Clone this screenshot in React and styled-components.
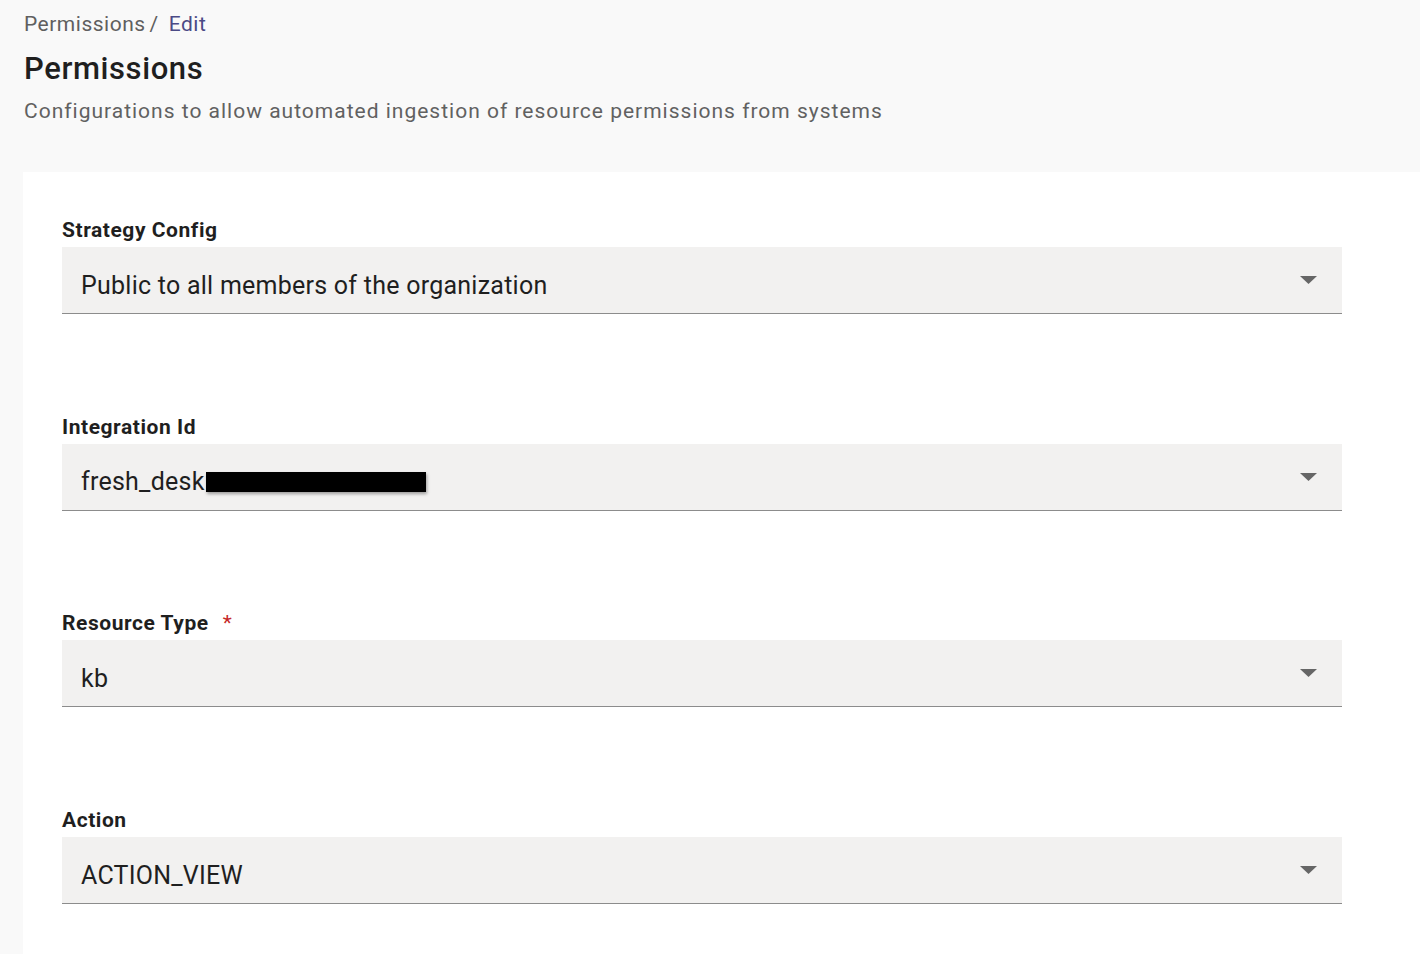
import styled, { createGlobalStyle } from "styled-components";

const GlobalStyle = createGlobalStyle`
  html, body {
    margin: 0;
    padding: 0;
    background: #f9f9f9;
    font-family: Roboto, "Liberation Sans", sans-serif;
  }
`;

const Page = styled.div`
  min-height: 100vh;
  background: #f9f9f9;
  overflow: hidden;
`;

const Header = styled.header`
  padding: 12px 24px 0 24px;
`;

const Breadcrumb = styled.div`
  display: flex;
  font-size: 21px;
  line-height: 24px;
  color: #5f5f5f;
  letter-spacing: 0.5px;
`;

const Crumb = styled.span`
  color: ${(p) => (p.$active ? "#4b4a86" : "#5f5f5f")};
`;

const Separator = styled.span`
  margin: 0 10px 0 4px;
`;

const Title = styled.h1`
  margin: 15px 0 0 0;
  font-size: 31px;
  line-height: 36px;
  font-weight: 500;
  color: #1f1f1f;
  letter-spacing: 0.6px;
`;

const Subtitle = styled.p`
  margin: 10px 0 0 0;
  font-size: 21px;
  line-height: 28px;
  color: #616161;
  letter-spacing: 1px;
`;

const Card = styled.main`
  margin: 47px 0 0 23px;
  background: #fff;
  padding: 46px 78px 40px 39px;
  min-height: 800px;
`;

const Field = styled.div`
  margin-bottom: 100.7px;
`;

const Label = styled.label`
  display: flex;
  align-items: center;
  gap: 14px;
  font-size: 21px;
  line-height: 24px;
  font-weight: 700;
  color: #1f1f1f;
  letter-spacing: 0.55px;
  margin-bottom: 5px;
`;

const Required = styled.span`
  color: #c62828;
  font-weight: 400;
`;

const SelectBox = styled.div`
  position: relative;
  height: 66px;
  box-sizing: content-box;
  background: #f2f1f0;
  border-bottom: 1px solid #8c8c8c;
  padding: 0 60px 0 19px;
  display: flex;
  align-items: center;
`;

const Value = styled.span`
  font-size: 25px;
  line-height: 24px;
  color: #1f1f1f;
  letter-spacing: 0.25px;
  padding-top: 11px;
  display: flex;
  align-items: center;
`;

const Redacted = styled.span`
  display: inline-block;
  width: 220px;
  height: 20px;
  background: #000;
  margin-left: 1px;
  box-shadow: 1px 2px 3px rgba(0, 0, 0, 0.35);
`;

const Arrow = styled.svg`
  position: absolute;
  right: 25px;
  top: 29px;
  width: 17px;
  height: 8px;
`;

const DropArrow = () => (
  <Arrow viewBox="0 0 17 8">
    <path d="M0 0 L17 0 L8.5 8 Z" fill="#666" />
  </Arrow>
);

const fields = [
  { label: "Strategy Config", value: "Public to all members of the organization" },
  { label: "Integration Id", value: "fresh_desk", redacted: true },
  { label: "Resource Type", value: "kb", required: true },
  { label: "Action", value: "ACTION_VIEW" },
];

export default function App() {
  return (
    <Page>
      <GlobalStyle />
      <Header>
        <Breadcrumb>
          <Crumb>Permissions</Crumb>
          <Separator>/</Separator>
          <Crumb $active>Edit</Crumb>
        </Breadcrumb>
        <Title>Permissions</Title>
        <Subtitle>
          Configurations to allow automated ingestion of resource permissions from systems
        </Subtitle>
      </Header>
      <Card>
        {fields.map((f) => (
          <Field key={f.label}>
            <Label>
              {f.label}
              {f.required && <Required>*</Required>}
            </Label>
            <SelectBox>
              <Value>
                {f.value}
                {f.redacted && <Redacted />}
              </Value>
              <DropArrow />
            </SelectBox>
          </Field>
        ))}
      </Card>
    </Page>
  );
}
